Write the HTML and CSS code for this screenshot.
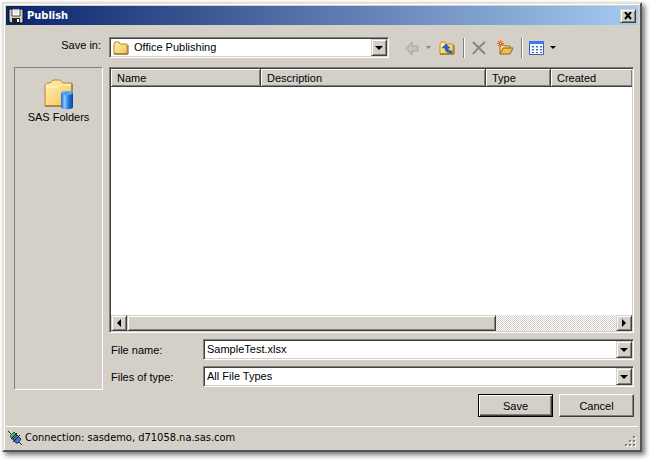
FILE: index.html
```html
<!DOCTYPE html>
<html lang="en">
<head>
    <meta charset="UTF-8">
    <meta name="viewport" content="width=device-width, initial-scale=1.0">
    <title>Publish</title>
    <link rel="stylesheet" href="styles.css">
</head>
<body>
    <!-- shared gradients -->
    <svg class="defs" aria-hidden="true">
        <defs>
            <linearGradient id="folder" x1="0" y1="0" x2="1" y2="1">
                <stop offset="0" stop-color="#fff3b4"/>
                <stop offset="1" stop-color="#f2c255"/>
            </linearGradient>
            <linearGradient id="cylinder">
                <stop offset="0" stop-color="#1d66c8"/>
                <stop offset="0.3" stop-color="#8cc8ff"/>
                <stop offset="0.6" stop-color="#2480e8"/>
                <stop offset="1" stop-color="#0b4298"/>
            </linearGradient>
        </defs>
    </svg>

    <form class="window">
        <header class="titlebar">
            <svg class="icon" viewBox="0 0 16 16">
                <path d="M1 1h14v14H3l-2-2z" fill="#d4d0c8" stroke="#111"/>
                <path d="M4 1h8v7H4z" fill="#fff" stroke="#444"/>
                <path d="M6 3h4M6 5h4" stroke="#ccc"/>
                <path d="M4 10h8v5H4z" fill="#222"/>
                <path d="M9 11h2v3H9z" fill="#fff"/>
            </svg>
            <h1>Publish</h1>
            <button type="button" class="raised close" aria-label="Close">
                <svg width="8" height="8" viewBox="0 0 8 8"><path d="M1 0l6 7M7 0L1 7" stroke="#000" stroke-width="2"/></svg>
            </button>
        </header>

        <div class="content">
            <label class="look-label" for="folder-select">Save in:</label>
            <div class="top">
                <div class="combo">
                    <svg class="icon combo-icon" viewBox="0 0 16 16">
                        <path d="M1 13V4l1-2h4l1 2h7v10H1z" fill="url(#folder)" stroke="#b58a32"/>
                        <path d="M1 14h14V5" fill="none" stroke="#7d5b1d"/>
                    </svg>
                    <select id="folder-select"><option>Office Publishing</option></select>
                    <span class="raised arrow"><svg width="8" height="4" viewBox="0 0 8 4"><path d="M0 0h8L4 4z"/></svg></span>
                </div>
                <div class="tools">
                    <button type="button" class="tool" aria-label="Back" disabled>
                        <svg class="icon" viewBox="0 0 16 16">
                            <path d="M7 2v4h6v5H7v4L1 8.500z" fill="#c4c3c0" stroke="#a3a3a3"/>
                        </svg>
                        <svg width="5" height="3" viewBox="0 0 5 3"><path d="M0 0h5L2.500 3z" fill="#858585"/></svg>
                    </button>
                    <button type="button" class="tool" aria-label="Up one level">
                        <svg class="icon" viewBox="0 0 16 16">
                            <path d="M1 13V4l1-2h4l1 2h7v10H1z" fill="url(#folder)" stroke="#c48d20"/>
                            <path d="M1 14h14V5" fill="none" stroke="#84621f"/>
                            <path d="M7 4l4 4H9c0 2 1 3 4 3v2C9 13 6 12 6 8H3z" fill="#2864c4" stroke="#184898" stroke-width=".5"/>
                        </svg>
                    </button>
                    <span class="divider"></span>
                    <button type="button" class="tool delete" aria-label="Delete" disabled>
                        <svg class="icon" viewBox="0 0 16 16">
                            <path d="M2 2c3 3 7 7 12 12M14 2C9 6 5 10 2 14" fill="none" stroke="#858585" stroke-width="2"/>
                        </svg>
                    </button>
                    <button type="button" class="tool" aria-label="New folder">
                        <svg class="icon" viewBox="0 0 16 16">
                            <path d="M3 14V5h4l1 1h5v3" fill="#ffe48c" stroke="#99701f"/>
                            <path d="M3 14l3-6h10l-3 6z" fill="#efbc4e" stroke="#8d6417"/>
                            <path d="M3.500 0v7M0 3.500h7M1 1l5 5M6 1L1 6" stroke="#e66320"/>
                            <path d="M3 3h1v1H3z" fill="#fff4a8"/>
                        </svg>
                    </button>
                    <span class="divider"></span>
                    <button type="button" class="tool" aria-label="View">
                        <svg class="icon" viewBox="0 0 16 16">
                            <path d="M.5 1.500h14v13H.5z" fill="#f5f9ff" stroke="#3265ba"/>
                            <path d="M0 1h15v3H0z" fill="#3c7be4"/>
                            <path d="M3 6.500h10M3 9.500h10M3 12.500h10" stroke="#4a6696" stroke-dasharray="2 2"/>
                            <path d="M3 7.500h10M3 10.500h10" stroke="#a9bddf" stroke-dasharray="2 2"/>
                        </svg>
                        <svg width="6" height="3" viewBox="0 0 6 3"><path d="M0 0h6L3 3z"/></svg>
                    </button>
                </div>
            </div>

            <nav class="places">
                <a href="#">
                    <svg width="32" height="32" viewBox="0 0 32 32">
                        <path d="M2 28V7l2-2h3l3-3h7l3 3h9v23z" fill="url(#folder)" stroke="#b58532"/>
                        <path d="M3 9h11l3-2h11" fill="none" stroke="#fff8cf"/>
                        <path d="M2 28h27V6" fill="none" stroke="#8c6524"/>
                        <path d="M18 15v14c0 3 12 3 12 0V15z" fill="url(#cylinder)"/>
                        <ellipse cx="24" cy="15" rx="6" ry="2" fill="#4ca4f8"/>
                    </svg>
                    <span>SAS Folders</span>
                </a>
            </nav>

            <div class="main">
                <div class="list">
                    <table>
                        <thead>
                            <tr>
                                <th class="name">Name</th>
                                <th class="description">Description</th>
                                <th class="type">Type</th>
                                <th>Created</th>
                            </tr>
                        </thead>
                    </table>
                    <div class="scrollbar">
                        <button type="button" class="raised" aria-label="Scroll left"><svg width="4" height="8" viewBox="0 0 4 8"><path d="M4 0v8L0 4z"/></svg></button>
                        <div class="track"><div class="raised thumb"></div></div>
                        <button type="button" class="raised" aria-label="Scroll right"><svg width="4" height="8" viewBox="0 0 4 8"><path d="M0 0v8l4-4z"/></svg></button>
                    </div>
                </div>

                <div class="field">
                    <label for="filename">File name:</label>
                    <div class="combo">
                        <input type="text" id="filename" value="SampleTest.xlsx">
                        <button type="button" class="raised arrow" aria-label="Show names"><svg width="8" height="4" viewBox="0 0 8 4"><path d="M0 0h8L4 4z"/></svg></button>
                    </div>
                </div>
                <div class="field">
                    <label for="filetype">Files of type:</label>
                    <div class="combo">
                        <select id="filetype"><option>All File Types</option></select>
                        <span class="raised arrow"><svg width="8" height="4" viewBox="0 0 8 4"><path d="M0 0h8L4 4z"/></svg></span>
                    </div>
                </div>
            </div>

            <div class="actions">
                <button type="button" class="raised save">Save</button>
                <button type="button" class="raised">Cancel</button>
            </div>
        </div>

        <footer class="status">
            <svg class="icon" viewBox="0 0 16 16">
                <path d="M1 1l4 4M11 11l4 4" stroke="#222"/>
                <path d="M3 6l4-4 4 4-5 4z" fill="#5aa58c" stroke="#245c50"/>
                <path d="M6 9l4-4 4 4-3 4H9z" fill="#4878c8" stroke="#172c58"/>
                <path d="M4 9l6-6M6 12l7-7" stroke="#111"/>
            </svg>
            <span>Connection: sasdemo, d71058.na.sas.com</span>
            <svg class="grip" width="12" height="12" viewBox="0 0 12 12">
                <path d="M10 2h2v2h-2zM6 6h2v2H6zM10 6h2v2h-2zM2 10h2v2H2zM6 10h2v2H6zM10 10h2v2h-2z" fill="#fff"/>
                <path d="M9 1h2v2H9zM5 5h2v2H5zM9 5h2v2H9zM1 9h2v2H1zM5 9h2v2H5zM9 9h2v2H9z" fill="#858178"/>
            </svg>
        </footer>
    </form>
</body>
</html>
```
FILE: styles.css
```css
* {
    box-sizing: border-box;
}
body {
    display: flex;
    min-height: 100vh;
    margin: 0;
    padding: 2px 8px 8px 2px;
    background: #fff;
    font-family: "Liberation Sans", Arial, sans-serif;
    font-size: 11px;
    line-height: 14px;
    color: #000;
}
svg {
    display: block;
    flex: none;
}
button, input, select {
    font: inherit;
    color: inherit;
    border-radius: 0;
}
.defs {
    position: absolute;
    width: 0;
    height: 0;
}
.icon {
    width: 16px;
    height: 16px;
}
.window {
    flex: 1;
    display: flex;
    flex-direction: column;
    padding: 2px;
    background: #d4d0c8;
    border: 2px solid;
    border-color: #e4e1dc #555 #555 #e4e1dc;
    box-shadow: inset 1px 1px #fff, 3px 3px 5px #777;
}
.raised {
    display: flex;
    align-items: center;
    justify-content: center;
    padding: 0;
    background: #d4d0c8;
    border: 1px solid;
    border-color: #d4d0c8 #404040 #404040 #d4d0c8;
    box-shadow: inset 1px 1px #fff, inset -1px -1px #808080;
}

/* title bar */
.titlebar {
    display: flex;
    align-items: center;
    gap: 3px;
    height: 19px;
    padding: 0 2px;
    background: linear-gradient(to right, #0a246a, #a6caf0);
    color: #fff;
}
.titlebar h1 {
    flex: 1;
    margin: 0;
    font: bold 11px "DejaVu Sans Condensed", "DejaVu Sans", sans-serif;
}
.close {
    width: 16px;
    height: 14px;
}

/* content */
.content {
    flex: 1;
    display: grid;
    grid-template-columns: 89px minmax(0, 1fr);
    grid-template-rows: auto 1fr auto;
    column-gap: 6px;
    padding: 12px 4px 9px 8px;
}
.look-label {
    padding: 1px 2px 0 0;
    text-align: right;
}
.top {
    display: flex;
    align-items: center;
    padding-bottom: 9px;
}
.top .combo {
    flex: 1;
}
.combo {
    display: flex;
    align-items: center;
    height: 21px;
    padding: 1px;
    background: #fff;
    border: 1px solid;
    border-color: #808080 #fff #fff #808080;
    box-shadow: inset 1px 1px #404040, inset -1px -1px #d4d0c8;
}
.combo-icon {
    margin-left: 2px;
}
.combo select, .combo input {
    appearance: none;
    flex: 1;
    min-width: 0;
    height: 15px;
    margin-left: 1px;
    padding: 0 1px;
    border: 0;
    outline: 0;
    background: none;
    line-height: 15px;
}
.combo-icon + select {
    margin-left: 4px;
}
.arrow {
    width: 16px;
    height: 17px;
    pointer-events: none;
}
.tools {
    display: flex;
    align-items: center;
    gap: 8px;
    width: 245px;
    padding-left: 16px;
}
.tool {
    display: flex;
    align-items: center;
    gap: 5px;
    padding: 0;
    border: 0;
    background: none;
}
.delete {
    margin-right: 2px;
}
.divider {
    width: 2px;
    height: 20px;
    margin-right: -2px;
    border-left: 1px solid #808080;
    border-right: 1px solid #fff;
}
.places {
    grid-row: 2 / 4;
    grid-column: 1;
    margin-bottom: 27px;
    padding-top: 10px;
    border: 1px solid;
    border-color: #808080 #fff #fff #808080;
}
.places a {
    display: flex;
    flex-direction: column;
    align-items: center;
    color: #000;
    text-decoration: none;
}
.main {
    display: flex;
    flex-direction: column;
    gap: 6px;
}

/* file list */
.list {
    flex: 1;
    display: flex;
    flex-direction: column;
    justify-content: space-between;
    padding: 1px;
    background: #fff;
    border: 1px solid;
    border-color: #808080 #fff #fff #808080;
    box-shadow: inset 1px 1px #404040, inset -1px -1px #d4d0c8;
}
.list table {
    width: 100%;
    table-layout: fixed;
    border-collapse: separate;
    border-spacing: 0;
}
.list th {
    height: 18px;
    padding: 1px 6px 0;
    background: #d4d0c8;
    border-right: 1px solid #404040;
    border-bottom: 1px solid #404040;
    box-shadow: inset 1px 1px #fff, inset -1px -1px #808080;
    font-weight: normal;
    text-align: left;
}
.list th:last-child {
    border-right: 0;
}
.name {
    width: 150px;
}
.description {
    width: 225px;
}
.type {
    width: 65px;
}
.scrollbar {
    display: flex;
    height: 16px;
}
.scrollbar button {
    width: 16px;
}
.track {
    flex: 1;
    display: flex;
    background: repeating-conic-gradient(#fff 0 25%, #d4d0c8 0 50%) 0 0 / 2px 2px;
}
.thumb {
    width: 75.5%;
}

/* bottom fields */
.field {
    display: flex;
    align-items: center;
}
.field label {
    width: 94px;
    padding-left: 2px;
}
.field .combo {
    flex: 1;
}
.actions {
    grid-column: 2;
    display: flex;
    justify-content: flex-end;
    gap: 6px;
    padding-top: 7px;
}
.actions button {
    width: 75px;
    height: 23px;
    border-color: #fff #404040 #404040 #fff;
    box-shadow: inset -1px -1px #808080;
}
.actions .save {
    border-color: #000;
    box-shadow: inset 1px 1px #fff, inset -1px -1px #404040, inset -2px -2px #808080;
}

/* status bar */
.status {
    display: flex;
    align-items: center;
    gap: 2px;
    height: 22px;
    padding: 0 1px;
    border-top: 1px solid #fff;
    font: 11px "DejaVu Sans Condensed", "DejaVu Sans", sans-serif;
}
.status .grip {
    margin: auto 1px 1px auto;
}
```
